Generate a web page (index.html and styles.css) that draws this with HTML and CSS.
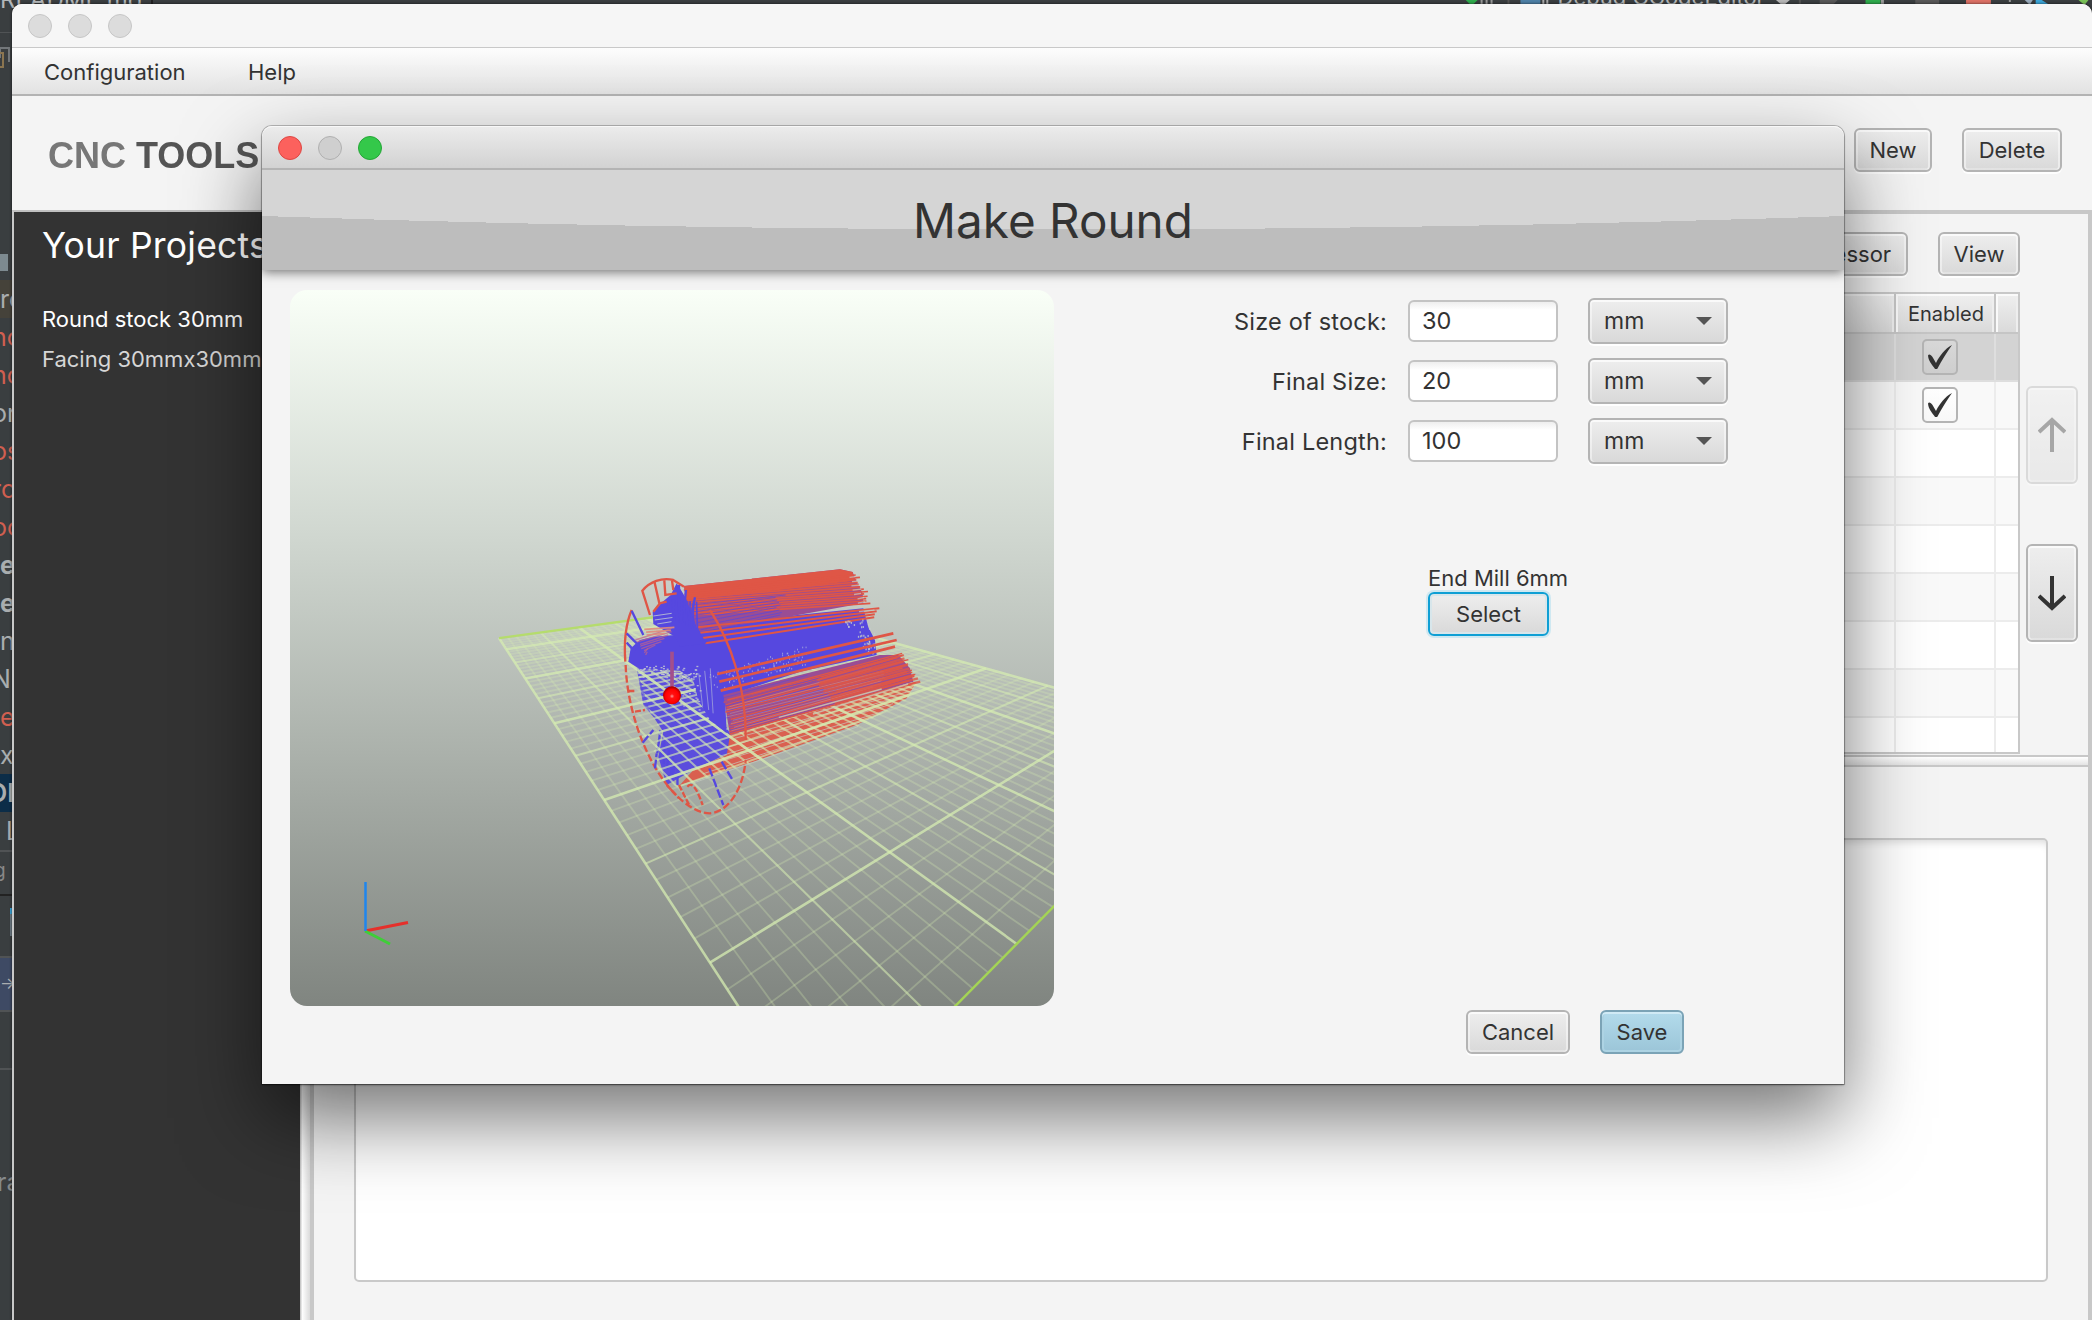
FILE: index.html
```html
<!DOCTYPE html>
<html lang="en">
<head>
<meta charset="utf-8">
<title>CNC Tools</title>
<link rel="stylesheet" href="styles.css">
</head>
<body>
<div class="desktop">
  <div class="ide">
    <div class="ide-top">
      <span class="ide-file">README.md</span><span class="ide-tab"></span>
      <svg class="ide-icons" width="150" height="10" viewBox="0 0 150 10"><path d="M67 0h12l-6 6z" fill="#2faa4c"/><path d="M83 0v4M88 0v4M93 0v4" stroke="#999" stroke-width="2"/><path d="M110 0v5" stroke="#555" stroke-width="2"/><path d="M122 0h20v4h-20z" fill="#4d7fa5"/><path d="M145 0v5M149 0v5" stroke="#aaa" stroke-width="2"/></svg>
      <span class="ide-run">Debug GCodeEditor</span>
      <svg class="ide-tools" width="330" height="10" viewBox="0 0 330 10"><path d="M12 0h14l-7 6z" fill="#b5b5b5"/><path d="M36 0v5" stroke="#555" stroke-width="2"/><path d="M56 0h18l-4 4h-14zM152 0h24v4h-24z" fill="#585858"/><path d="M102 0h15v5h-15z" fill="#2faa4c"/><path d="M119 0v5" stroke="#999" stroke-width="3"/><path d="M203 0h25v5h-25z" fill="#db7065"/><path d="M247 0v2" stroke="#999" stroke-width="2"/><path d="M262 0h8l-3 5z" fill="#9ab"/><path d="M273 0h6l8 5h-14z" fill="#3ba5d8"/><path d="M316 0h10l-4 5z" fill="#79c257"/></svg>
    </div>
    <svg class="ide-copy" width="12" height="36" viewBox="0 0 12 36"><path d="M0 15V5h9v14" fill="none" stroke="#73777a" stroke-width="2"/><path d="M0 10h3v14h-3" fill="none" stroke="#8b7550" stroke-width="2"/></svg>
    <div class="ide-thumb"></div>
    <div class="ide-rows">
      <div class="ide-row warm">re</div>
      <div class="ide-row red out">no</div>
      <div class="ide-row red out">no</div>
      <div class="ide-row out">or</div>
      <div class="ide-row red out">os</div>
      <div class="ide-row red out">ro</div>
      <div class="ide-row red out">oc</div>
      <div class="ide-row bold">e</div>
      <div class="ide-row bold">e</div>
      <div class="ide-row">n</div>
      <div class="ide-row out">N:</div>
      <div class="ide-row red">e.</div>
      <div class="ide-row">x</div>
      <div class="ide-row sel out">ON</div>
      <div class="ide-row in">L</div>
    </div>
    <div class="ide-foot g">g</div>
    <div class="ide-foot mark"><i></i></div>
    <div class="ide-foot arrow">→</div>
    <div class="ide-foot blank"></div>
    <div class="ide-foot ra">ra</div>
  </div>

  <div class="app">
    <div class="titlebar"><i class="light"></i><i class="light"></i><i class="light"></i></div>
    <div class="menubar"><span class="menu-conf">Configuration</span><span>Help</span></div>
    <div class="brandbar">
      <div class="brand"><span class="brand-a">CNC</span> TOOLS</div>
      <div class="brand-actions"><div class="btn new">New</div><div class="btn delete">Delete</div></div>
    </div>
    <div class="main">
      <div class="sidebar">
        <div class="side-title">Your Projects</div>
        <div class="side-item active">Round stock 30mm</div>
        <div class="side-item">Facing 30mmx30mm</div>
      </div>
      <div class="vsplit"></div>
      <div class="work">
        <div class="ops">
          <div class="ops-left">
            <div class="ops-actions"><div class="btn post">Post-processor</div><div class="btn view">View</div></div>
            <div class="table">
              <div class="tr th"><div class="td"></div><div class="td">Enabled</div><div class="td"></div></div>
              <div class="tr picked"><div class="td"></div><div class="td"><div class="check"><svg width="24" height="24" viewBox="0 0 24 24"><path d="M0 10.500C1 8.500 3 10 4.500 12L8 18C11.500 11 17 3.500 24 0C19 7 14 15 9.500 23.500C8.500 25 7.300 24.500 6 22.500C3.500 19 .500 16 0 10.500Z" fill="#333"/></svg></div></div><div class="td"></div></div>
              <div class="tr"><div class="td"></div><div class="td"><div class="check"><svg width="24" height="24" viewBox="0 0 24 24"><path d="M0 10.500C1 8.500 3 10 4.500 12L8 18C11.500 11 17 3.500 24 0C19 7 14 15 9.500 23.500C8.500 25 7.300 24.500 6 22.500C3.500 19 .500 16 0 10.500Z" fill="#333"/></svg></div></div><div class="td"></div></div>
              <div class="tr even"><div class="td"></div><div class="td"></div><div class="td"></div></div>
              <div class="tr"><div class="td"></div><div class="td"></div><div class="td"></div></div>
              <div class="tr even"><div class="td"></div><div class="td"></div><div class="td"></div></div>
              <div class="tr"><div class="td"></div><div class="td"></div><div class="td"></div></div>
              <div class="tr even"><div class="td"></div><div class="td"></div><div class="td"></div></div>
              <div class="tr"><div class="td"></div><div class="td"></div><div class="td"></div></div>
              <div class="tr even"><div class="td"></div><div class="td"></div><div class="td"></div></div>
            </div>
          </div>
          <div class="movers">
            <div class="btn mover off"><svg width="28" height="36" viewBox="0 0 28 36"><path d="M14 35V3M1 15L14 3L27 15" fill="none" stroke="#333" stroke-width="4"/></svg></div>
            <div class="btn mover"><svg width="28" height="36" viewBox="0 0 28 36"><path d="M14 1V33M1 21L14 33L27 21" fill="none" stroke="#333" stroke-width="4"/></svg></div>
          </div>
        </div>
        <div class="hsplit"></div>
        <div class="notes"><div class="textarea"></div></div>
      </div>
    </div>
  </div>

  <div class="dialog">
    <div class="dlg-title"><i class="light close"></i><i class="light min"></i><i class="light zoom"></i></div>
    <div class="dlg-head">
      <svg class="dlg-curve" width="1582" height="100" viewBox="0 0 1582 100" shape-rendering="crispEdges"><path d="M0 46Q791 73 1582 46V100H0Z" fill="#bdbdbd"/></svg>
      <span class="dlg-name">Make Round</span>
    </div>
    <div class="dlg-body">
      <svg class="scene" width="764" height="716" viewBox="290 290 764 716">
        <defs>
          <linearGradient id="sky" x1="0" y1="0" x2="0" y2="1"><stop offset="0" stop-color="#f9fff7"/><stop offset=".35" stop-color="#cfd6cf"/><stop offset="1" stop-color="#808580"/></linearGradient>
          <radialGradient id="ball" cx=".5" cy=".55" r=".5"><stop offset="0" stop-color="#ff9a9a"/><stop offset=".25" stop-color="#ff1212"/><stop offset=".75" stop-color="#f00"/><stop offset="1" stop-color="#b00000"/></radialGradient>
          <clipPath id="cut"><polygon points="637,670 695,674 730,733 813,712 917,682 907,700 857,727 753,762 680,787 664,784 652,757 660,730 650,712"/></clipPath>
        </defs>
        <rect x="290" y="290" width="764" height="716" fill="url(#sky)"/>
        <g class="model">
          <g transform="translate(480 540) scale(.33333)" fill="none">
            <g id="below"></g>
          </g>
          <g id="grid" fill="none"></g>
          <g id="gridcut" fill="none" clip-path="url(#cut)"></g>
          <g transform="translate(480 540) scale(.33333)" fill="none">
            <g id="above"></g>
            <g stroke="#df5646" stroke-width="7">
              <path d="M455 210C438 250 432 310 436 365"/>
              <path d="M437 375C440 470 470 590 530 690C580 770 640 820 690 820C750 815 790 740 797 660" stroke-dasharray="22 9"/>
              <path d="M797 600C800 450 755 310 690 210"/>
              <path d="M510 225L487 152C510 125 545 112 580 120L612 140M524 128L538 190L560 185M553 122L556 165L590 160M576 122L580 150M540 190L520 215"/>
              <path d="M445 453H468M465 515L495 510M560 735L597 775M597 735L630 800M622 740C640 720 655 760 668 795" stroke-dasharray="18 6"/>
            </g>
            <g stroke="#5648df" stroke-width="7">
              <path d="M455 212L490 285M440 280L480 320M440 308L465 335M597 135V200M645 172L636 215M618 150L612 210"/>
              <path d="M688 685L730 795M725 665L758 720M488 608L520 570M525 685L530 640" stroke-dasharray="26 8"/>
            </g>
            <path d="M576 335V445" stroke="#a34f8c" stroke-width="11"/>
            <circle cx="576" cy="466" r="27" fill="url(#ball)"/>
          </g>
          <g fill="none" stroke-width="2.500"><path d="M365 931L408 922.500" stroke="#e5302b" stroke-width="3"/><path d="M365 931L390 944" stroke="#3fce38" stroke-width="3"/><path d="M365.500 882V931" stroke="#1f86ee"/></g>
        </g>
      </svg>
      <div class="form">
        <div class="fields">
          <div class="field"><label>Size of stock:</label><div class="input">30</div><div class="combo">mm<i></i></div></div>
          <div class="field"><label>Final Size:</label><div class="input">20</div><div class="combo">mm<i></i></div></div>
          <div class="field"><label>Final Length:</label><div class="input">100</div><div class="combo">mm<i></i></div></div>
        </div>
        <div class="tool"><span class="tool-name">End Mill 6mm</span><div class="btn select">Select</div></div>
        <div class="dlg-actions"><div class="btn cancel">Cancel</div><div class="btn save">Save</div></div>
      </div>
    </div>
  </div>
</div>
<script src="scene.js"></script>
</body>
</html>
```
FILE: styles.css
```css
* { box-sizing: border-box; }
body { margin: 0; overflow: hidden; font-family: Inter, "Liberation Sans", sans-serif; font-size: 22px; color: #333; }
i { font-style: normal; }
svg { display: block; }
.desktop { position: relative; width: 2092px; height: 1320px; overflow: hidden; background: #3a3e40; }

/* editor behind the application */
.ide { width: 2092px; height: 1320px; color: #a9adaf; line-height: 38px; font-size: 25px; }
.ide-top { display: flex; height: 33px; overflow: hidden; border-bottom: 1px solid #505355; }
.ide-file { width: 152px; line-height: 24px; margin-top: -12px; font-size: 24px; color: #b3b7b9; white-space: nowrap; }
.ide-tab { width: 2px; background: #222; }
.ide-icons { margin-left: 1246px; }
.ide-run { margin-left: 9px; width: 206px; margin-top: -15px; line-height: 24px; font-size: 22px; white-space: nowrap; color: #b3b7b9; }
.ide-copy { margin-top: 10px; }
.ide-thumb { width: 8px; height: 17px; margin-top: 175px; background: #7d8a90; }
.ide-rows { margin-top: 9px; width: 12px; overflow: hidden; }
.ide-row { height: 38px; white-space: nowrap; }
.ide-row.out { text-indent: -8px; }
.ide-row.in { text-indent: 6px; }
.ide-row.red { color: #d05f50; }
.ide-row.bold { font-weight: 700; }
.ide-row.warm { background: #45423a; }
.ide-row.sel { background: #0c2d48; font-weight: 600; text-indent: -12px; }
.ide-foot { width: 12px; overflow: hidden; border-top: 2px solid #505355; }
.ide-foot.g { height: 46px; font-size: 19px; text-indent: -6px; color: #888; border-bottom: 2px solid #222; }
.ide-foot.mark { height: 60px; border-top: 0; padding: 12px 0 0 10px; }
.ide-foot.mark i { display: block; width: 2px; height: 28px; background: #6d7b84; border-top: 6px solid #3ba5d8; }
.ide-foot.arrow { height: 54px; line-height: 50px; font-size: 16px; background: #3e4a64; }
.ide-foot.blank { height: 58px; }
.ide-foot.ra { height: 200px; line-height: 225px; text-indent: -3px; color: #858a8c; }

/* application window */
.app { position: absolute; left: 12px; top: 4px; width: 2080px; height: 1316px; display: flex; flex-direction: column; background: #f4f4f4; border-radius: 10px 10px 0 0; overflow: hidden; box-shadow: 0 0 3px rgba(0,0,0,.7); }
.titlebar { height: 44px; padding: 10px 16px; display: flex; gap: 16px; background: #f6f6f6; border-bottom: 1px solid #c9c9c9; }
.light { width: 24px; height: 24px; border-radius: 50%; background: #dcdcdc; border: 1px solid #c6c6c6; }
.menubar { height: 48px; display: flex; align-items: center; padding: 1px 32px 0; border-bottom: 2px solid #b3b3b3; background: linear-gradient(#fdfdfd, #e2e2e2); }
.menu-conf { width: 204px; }
.brandbar { height: 114px; display: flex; justify-content: space-between; padding: 32px 30px 0 36px; }
.brand { font: 700 36px/55px "Liberation Sans", Arial, sans-serif; color: #555; filter: blur(.6px); white-space: nowrap; }
.brand-a { color: #777; }
.brand-actions { display: flex; gap: 30px; }
.btn { height: 44px; display: flex; align-items: center; justify-content: center; border: 2px solid #b4b4b4; border-radius: 6px; background: linear-gradient(#eeeeee, #d9d9d9); box-shadow: inset 0 2px 0 #fafafa, inset 2px 0 0 rgba(255,255,255,.45), inset -2px 0 0 rgba(255,255,255,.45), inset 0 -2px 0 rgba(255,255,255,.25), 0 2px 0 rgba(255,255,255,.85); color: #333; white-space: nowrap; }
.new { width: 78px; }
.delete { width: 100px; }
.main { flex: 1; display: flex; min-height: 0; }
.sidebar { width: 288px; border-left: 2px solid #c8c8c8; border-top: 2px solid #c0c0c0; background: #333; color: #fff; padding-left: 28px; white-space: nowrap; overflow: hidden; }
.side-title { font-size: 35.500px; line-height: 44px; margin-top: 12px; letter-spacing: .2px; }
.side-item { height: 40px; line-height: 40px; color: #d6d6d6; }
.side-item.active { margin-top: 31px; color: #fff; }
.vsplit { width: 14px; border-right: 4px solid #c8c8c8; background: linear-gradient(90deg, #c8c8c8 1px, #fff 2px, #dadada); }
.work { flex: 1; display: flex; flex-direction: column; border-top: 4px solid #c8c8c8; border-right: 4px solid #c8c8c8; }
.ops { height: 541px; display: flex; justify-content: flex-end; padding: 18px 10px 0 0; }
.ops-actions { display: flex; justify-content: flex-end; gap: 30px; }
.post { width: 194px; }
.view { width: 82px; }
.table { width: 420px; height: 462px; margin-top: 16px; border: 2px solid #c8c8c8; overflow: hidden; background: #fff; }
.tr { height: 48px; display: flex; background: #f9f9f9; }
.tr.even { background: #fff; }
.tr.picked { background: #d3d3d3; }
.td { flex: 1; display: flex; align-items: center; justify-content: center; border-right: 2px solid #ececec; border-bottom: 2px solid #ececec; }
.picked .td { border-color: #dedede; }
.td:nth-child(2) { flex: 0 0 100px; padding-right: 10px; }
.td:nth-child(3) { flex: 0 0 22px; border-right: 0; }
.tr.th { height: 40px; font-size: 20px; }
.th .td, .th .td:nth-child(2) { padding: 2px 0 0 2px; border-color: #c5c5c5; background: linear-gradient(#efefef, #dadada); box-shadow: inset 2px 2px 0 #fafafa, inset -2px 0 0 #eee; }
.check { width: 36px; height: 36px; border: 2px solid #b4b4b4; border-radius: 5px; display: flex; align-items: center; justify-content: center; background: linear-gradient(#fff, #f8f8f8); }
.picked .check { background: linear-gradient(#d8d8d8, #cecece); }
.movers { width: 52px; margin-left: 6px; padding-top: 154px; display: flex; flex-direction: column; gap: 60px; }
.mover { height: 98px; }
.off { opacity: .4; }
.hsplit { height: 12px; border-top: 2px solid #c8c8c8; border-bottom: 2px solid #c8c8c8; background: linear-gradient(#fff, #e4e4e4); }
.notes { flex: 1; padding: 71px 40px 38px; }
.textarea { height: 100%; border: 2px solid #c9c9c9; border-radius: 5px; background: #fff; box-shadow: inset 0 8px 8px -6px #d8d8d8; }

/* dialog */
.dialog { position: absolute; left: 262px; top: 126px; width: 1582px; height: 958px; display: flex; flex-direction: column; background: #f4f4f4; border-radius: 10px 10px 0 0; box-shadow: 0 0 0 1px rgba(0,0,0,.22), 0 1px 2px 0 rgba(0,0,0,.5), 0 34px 80px rgba(0,0,0,.55); }
.dlg-title { height: 44px; padding: 10px 16px; display: flex; gap: 16px; border-radius: 10px 10px 0 0; border-bottom: 2px solid #b4b4b4; background: linear-gradient(#ececec, #d2d2d2); box-shadow: inset 0 1px 0 #f8f8f8; }
.close { background: #fc615d; border-color: #dd4743; }
.min { background: #cfcfcf; border-color: #b0b0b0; }
.zoom { background: #34c84a; border-color: #24a636; }
.dlg-head { height: 100px; display: grid; justify-items: center; align-items: center; background: #d5d5d5; box-shadow: 0 2px 11px rgba(0,0,0,.55); clip-path: inset(0 0 -20px 0); }
.dlg-curve, .dlg-name { grid-area: 1 / 1; }
.dlg-name { font-size: 47.600px; line-height: 60px; padding-top: 1px; z-index: 1; }
.dlg-body { flex: 1; display: flex; padding: 20px 28px 30px; }
.scene { border-radius: 17px; }
.model { filter: blur(.45px); }
.form { flex: 1; display: flex; flex-direction: column; }
.fields { display: flex; flex-direction: column; gap: 14px; padding-top: 8px; }
.field { height: 46px; display: flex; align-items: center; }
.field label { width: 333px; text-align: right; font-size: 23.500px; letter-spacing: .2px; }
.input { width: 150px; height: 42px; margin-left: 21px; padding-left: 12px; line-height: 38px; font-size: 23.500px; border: 2px solid #c3c3c3; border-radius: 6px; background: linear-gradient(#eee, #fff 8px); }
.combo { width: 140px; height: 46px; margin-left: 30px; padding: 0 14px; display: flex; justify-content: space-between; align-items: center; border: 2px solid #b4b4b4; border-radius: 6px; background: linear-gradient(#eee, #d9d9d9); font-size: 23px; box-shadow: inset 0 2px 0 #fafafa, inset 2px 0 0 rgba(255,255,255,.45), inset -2px 0 0 rgba(255,255,255,.45), 0 2px 0 rgba(255,255,255,.85); }
.combo i { border: 8px solid transparent; border-top-color: #555; border-bottom: 0; }
.tool { display: flex; flex-direction: column; padding: 100px 0 0 374px; }
.tool-name { line-height: 28px; font-size: 22px; }
.select { width: 121px; border-color: #0f9fd4; box-shadow: 0 0 0 2px #cfe8f1, inset 0 0 0 2px #d8e6eb; }
.dlg-actions { margin-top: auto; display: flex; gap: 30px; padding-left: 412px; }
.cancel { width: 104px; }
.save { width: 84px; background: linear-gradient(#b3dbec, #9bc5d8); border-color: #7ba3b6; box-shadow: inset 0 2px 0 #d0eaf5, inset 0 0 0 2px #add3e3; }
```
FILE: scene.js
```js
const NS = 'http://www.w3.org/2000/svg';

function add(parent, d, color, width, opacity) {
  const p = document.createElementNS(NS, 'path');
  p.setAttribute('d', d);
  p.setAttribute('stroke', color);
  p.setAttribute('stroke-width', width);
  if (opacity) p.setAttribute('stroke-opacity', opacity);
  parent.appendChild(p);
  return p;
}

function fill(parent, points, color, opacity) {
  const p = document.createElementNS(NS, 'polygon');
  p.setAttribute('points', points);
  p.setAttribute('fill', color);
  p.setAttribute('fill-opacity', opacity || 1);
  parent.appendChild(p);
}

// Least-squares projection from plane points to view points.
function projection(pairs) {
  const rows = [];
  for (const [pu, pv, px, py] of pairs) {
    const u = pu / 50, v = pv / 50, x = px / 1000, y = py / 1000;
    rows.push([u, v, 1, 0, 0, 0, -u * x, -v * x, x]);
    rows.push([0, 0, 0, u, v, 1, -u * y, -v * y, y]);
  }
  const m = [];
  for (let i = 0; i < 8; i++) {
    m.push([]);
    for (let c = 0; c < 9; c++) m[i].push(rows.reduce((s, r) => s + r[i] * r[c], 0));
  }
  for (let i = 0; i < 8; i++) {
    let best = i;
    for (let r = i; r < 8; r++) if (Math.abs(m[r][i]) > Math.abs(m[best][i])) best = r;
    [m[i], m[best]] = [m[best], m[i]];
    for (let r = 0; r < 8; r++) {
      if (r === i) continue;
      const f = m[r][i] / m[i][i];
      for (let c = i; c < 9; c++) m[r][c] -= f * m[i][c];
    }
  }
  const h = m.map((row, i) => row[8] / row[i]);
  return (pu, pv) => {
    const u = pu / 50, v = pv / 50;
    const w = (h[6] * u + h[7] * v + 1) / 1000;
    return ((h[0] * u + h[1] * v + h[2]) / w).toFixed(2) + ' ' + ((h[3] * u + h[4] * v + h[5]) / w).toFixed(2);
  };
}

// Work plane: 40 x 50 cells, a stronger line every 5 and every 10.
const P = projection([
  [0, 0, 711.3, 962.5], [0, 10, 605, 799.8], [0, 20, 555, 723.3], [0, 45, 498.3, 638.3],
  [5, 0, 812, 900.5], [10, 45, 579.3, 627.3], [10, -5, 1017.8, 943.6], [10, 0, 889.5, 853],
  [10, 5, 803, 792], [20, 0, 1000, 785], [20, 5, 915, 744], [20, 10, 850, 715],
  [40, 5, 1046.7, 686.7], [40, 10, 986.7, 668]
]);
const grid = document.getElementById('grid');
function rank(i) {
  return i % 10 === 0 ? [2.6, .75] : i % 5 === 0 ? [2.1, .58] : [1.9, .27];
}
function net(parent, minorOnly) {
  for (let i = 0; i <= 40; i++) {
    const [w, o] = rank(i);
    add(parent, `M${P(i, -5)}L${P(i, 45)}`, '#d6ecb2', w, minorOnly ? .5 : o);
  }
  for (let k = -4; k < 45; k++) {
    const [w, o] = rank(k);
    add(parent, `M${P(0, k)}L${P(40, k)}`, '#d6ecb2', w, minorOnly ? .5 : o);
  }
}
net(grid, false);
net(document.getElementById('gridcut'), true);
add(grid, `M${P(0, -5)}L${P(40, -5)}`, '#a4d455', 2.4);
add(grid, `M${P(0, 45)}L${P(40, 45)}`, '#b5dc6c', 2.4);

// Repeatable noise for the ragged ends of the cutting moves.
let seed = 7;
function rnd() {
  seed = (seed * 16807) % 2147483647;
  return seed / 2147483647;
}
function moves(parent, a, b, c, d, n, color, width, jag, opacity) {
  for (let i = 0; i < n; i++) {
    const t = i / (n - 1);
    const x1 = a[0] + (c[0] - a[0]) * t + (rnd() - .5) * jag * .4;
    const y1 = a[1] + (c[1] - a[1]) * t;
    const x2 = b[0] + (d[0] - b[0]) * t + (rnd() - .5) * jag;
    const y2 = b[1] + (d[1] - b[1]) * t;
    add(parent, `M${x1} ${y1}L${x2} ${y2}`, color, width, opacity);
  }
}
function specks(parent, n, x, w, y, h, color) {
  for (let i = 0; i < n; i++) add(parent, `M${x + rnd() * w} ${y + rnd() * h}h6`, color, 4, .75);
}

const RED = '#df5646', BLUE = '#5648df', MIX = '#9a4d94';
const below = document.getElementById('below');
const above = document.getElementById('above');

fill(below, '470,385 640,400 750,580 745,640 640,690 560,735 535,650 550,575 520,530 490,495', BLUE, .95);
fill(below, '750,585 1000,515 1310,425 1280,475 1130,555 820,665 600,735 640,690 740,645', RED, .9);
moves(below, [770, 595], [1310, 445], [640, 728], [1130, 560], 6, '#c4cabf', 3, 30, .7);
moves(below, [530, 640], [545, 570], [590, 735], [590, 690], 7, BLUE, 7, 14);

// Middle blue body
fill(above, '445,365 452,325 480,300 520,290 585,285 600,240 650,240 900,230 1150,205 1165,262 1185,300 1190,345 960,395 735,470 740,580 690,540 655,480 640,420 600,392 480,388', BLUE);

// Upper bundle of passes
fill(above, '612,138 1080,88 1118,96 1130,125 1148,160 1150,190 900,235 660,275 620,210', MIX);
fill(above, '612,138 1080,88 1118,96 1122,122 900,150 620,180', RED);
moves(above, [610, 150], [1125, 105], [640, 225], [1175, 190], 13, RED, 5, 26);
moves(above, [630, 195], [900, 165], [660, 280], [900, 225], 9, BLUE, 3, 40, .7);
moves(above, [650, 262], [1195, 205], [675, 310], [1185, 232], 4, RED, 6, 16);
moves(above, [1110, 112], [1128, 110], [1140, 215], [1175, 210], 9, '#c6ccc4', 4, 20, .7);

// Entry cluster
fill(above, '585,290 520,252 518,215 548,185 572,165 590,130 603,150 615,170 628,200 640,225 648,260 680,310 600,320', BLUE);
moves(above, [560, 178], [560, 230], [650, 185], [650, 270], 10, BLUE, 5, 6);
moves(above, [470, 300], [575, 265], [500, 345], [500, 335], 8, '#c2638a', 4, 26, .7);
moves(above, [495, 268], [580, 262], [500, 285], [560, 280], 3, '#e08a7c', 5, 12, .9);
moves(above, [522, 228], [570, 220], [530, 252], [580, 245], 3, '#c3ccd0', 3, 12, .8);
moves(above, [655, 400], [665, 500], [690, 385], [700, 520], 3, '#b9bfd8', 3, 8, .6);
for (let i = 0; i < 110; i++) {
  const x = 690 + rnd() * 290;
  const y = 445 - (x - 640) * .3 + (rnd() - .5) * 56;
  add(above, `M${x} ${y}v5`, '#c6ccda', 3, .6);
}
for (let i = 0; i < 60; i++) {
  const y = 238 + rnd() * 100;
  add(above, `M${1090 + (y - 238) * .75 + rnd() * 70} ${y}v6`, '#c6ccca', 4, .8);
}
specks(above, 70, 470, 180, 378, 40, '#cfd5cf');
specks(above, 24, 600, 60, 400, 110, '#cfd5cf');

// Lower bundle of passes
fill(above, '730,465 960,405 1200,345 1255,345 1290,385 1300,425 1000,512 750,585', MIX);
moves(above, [735, 480], [1265, 340], [755, 582], [1305, 428], 15, RED, 4, 36);
moves(above, [735, 475], [1000, 405], [750, 570], [1100, 470], 9, BLUE, 3, 60, .55);
moves(above, [740, 500], [1180, 385], [755, 572], [1200, 450], 8, '#b59ab4', 2, 60, .7);
moves(above, [1010, 420], [1265, 345], [1060, 490], [1310, 425], 9, RED, 7, 26, .8);
moves(above, [900, 532], [1200, 447], [1000, 522], [1280, 432], 2, '#c9cdb8', 4, 20, .8);
add(above, 'M712 402L1240 280M718 425L1250 300M722 452L1245 320', RED, 8);
```
